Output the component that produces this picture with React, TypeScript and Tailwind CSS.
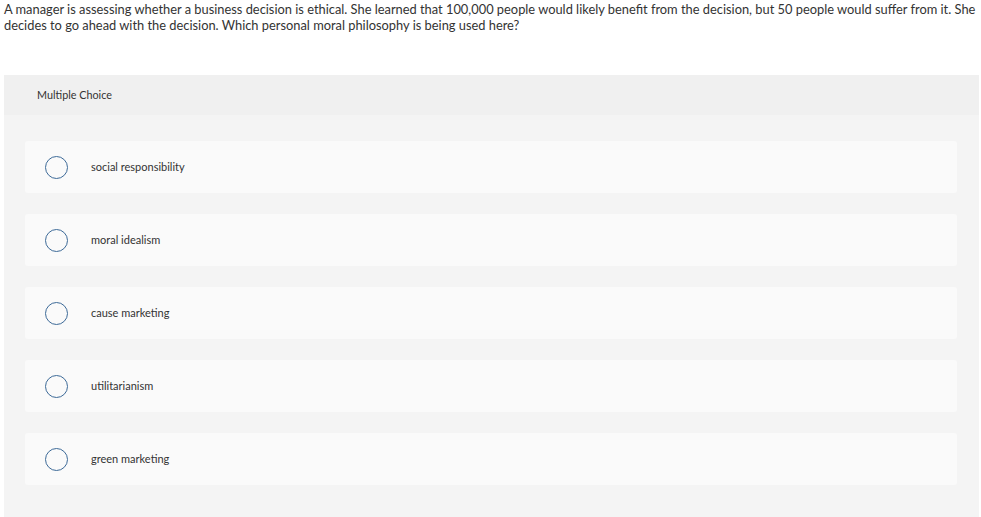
import React from 'react';

const options: string[] = [
  'social responsibility',
  'moral idealism',
  'cause marketing',
  'utilitarianism',
  'green marketing',
];

const App: React.FC = () => {
  return (
    <div className="min-h-screen bg-white text-[#333333]" style={{ fontFamily: 'Lato, "Open Sans", sans-serif' }}>
      {/* Question */}
      <p className="pl-[4px] pt-[1px] text-[12.85px] leading-[16px]">
        <span className="block whitespace-nowrap">
          A manager is assessing whether a business decision is ethical. She learned that 100,000 people would likely
          benefit from the decision, but 50 people would suffer from it. She
        </span>
        <span className="block whitespace-nowrap">
          decides to go ahead with the decision. Which personal moral philosophy is being used here?
        </span>
      </p>

      {/* Answer panel */}
      <div className="mx-[4px] mt-[42px] w-[975px] bg-[#f4f4f4]">
        <div className="flex h-[40px] items-center bg-[#f0f0f0] pl-[33px] text-[10.8px]">Multiple Choice</div>
        <div className="flex flex-col gap-[21px] px-[21px] pt-[26px] pb-[40px]">
          {options.map((label) => (
            <div key={label} className="flex h-[52px] w-[932px] items-center rounded-[3px] bg-[#fafafa] pl-[20px]">
              <span className="h-[23px] w-[23px] shrink-0 rounded-full border-[1.5px] border-[#3d6a98]" />
              <span className="ml-[23px] text-[11px]">{label}</span>
            </div>
          ))}
        </div>
      </div>
    </div>
  );
};

export default App;
